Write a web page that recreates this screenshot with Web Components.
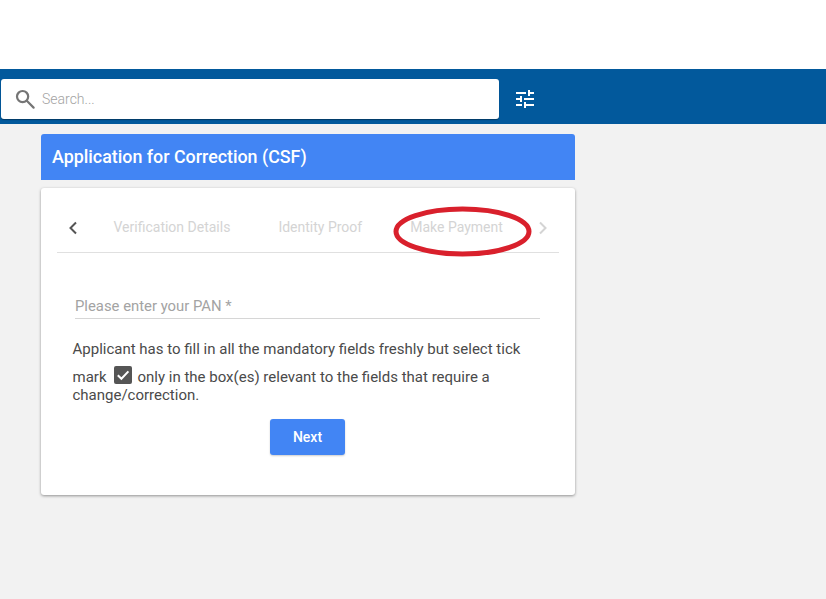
<!DOCTYPE html>
<html>
<head>
<meta charset="utf-8">
<style>
  html, body { margin: 0; height: 100%; }
  body { background: #f2f2f2; font-family: Roboto, "Liberation Sans", sans-serif; color: #4a4a4a; }
</style>
</head>
<body>
<app-page>
  <search-bar></search-bar>
  <form-panel title-text="Application for Correction (CSF)">
    <step-tabs></step-tabs>
    <pan-form></pan-form>
  </form-panel>
</app-page>

<script>
class AppPage extends HTMLElement {
  constructor() {
    super();
    this.attachShadow({ mode: 'open' });
    this.shadowRoot.innerHTML = `
      <style>
        :host { display: block; height: 599px; padding-top: 69px; box-sizing: border-box; background: linear-gradient(#fff 69px, #f2f2f2 69px); }
      </style>
      <slot></slot>`;
  }
}

class SearchBar extends HTMLElement {
  constructor() {
    super();
    this.attachShadow({ mode: 'open' });
    this.shadowRoot.innerHTML = `
      <style>
        :host { display: flex; align-items: flex-start; height: 55px; background: #02599c; padding: 10px 0 0 1px; box-sizing: border-box; }
        .box { width: 498px; height: 40px; background: #fff; border-radius: 3px; display: flex; align-items: center; box-shadow: 0 1px 1px rgba(0,0,0,.35); }
        .lens { margin-left: 14px; width: 20px; height: 20px; flex: none; }
        .ph { margin-left: 7px; font-size: 14px; font-weight: 300; color: #a3a3a3; }
        .tune { margin: 8px 0 0 14px; width: 24px; height: 24px; flex: none; }
      </style>
      <div class="box">
        <svg class="lens" viewBox="0 0 20 20" fill="none" stroke="#757575" stroke-width="2.2">
          <circle cx="7.6" cy="7.6" r="5.6"/>
          <path d="M11.8 11.8 L18.6 18.6" stroke-linecap="round"/>
        </svg>
        <span class="ph">Search...</span>
      </div>
      <svg class="tune" viewBox="0 0 24 24" fill="#fff">
        <path d="M3 17v2h6v-2H3zM3 5v2h10V5H3zm10 16v-2h8v-2h-8v-2h-2v6h2zM7 9v2H3v2h4v2h2V9H7zm14 4v-2H11v2h10zm-6-4h2V7h4V5h-4V3h-2v6z"/>
      </svg>`;
  }
}

class FormPanel extends HTMLElement {
  constructor() {
    super();
    this.attachShadow({ mode: 'open' });
    this.shadowRoot.innerHTML = `
      <style>
        :host { display: block; width: 534px; margin: 10px 0 0 41px; }
        .head { height: 44px; padding-bottom: 2px; background: #4285f4; border-radius: 3px 3px 0 0; color: #fff; font-size: 17.85px; font-weight: 500; display: flex; align-items: center; padding-left: 11px; }
        .card { margin-top: 8px; height: 307px; box-sizing: border-box; background: #fff; border-radius: 3px; box-shadow: 0 1px 3px rgba(0,0,0,.4); padding: 16px 16px 0; }
      </style>
      <div class="head"></div>
      <div class="card"><slot></slot></div>`;
    this.shadowRoot.querySelector('.head').textContent = this.getAttribute('title-text');
  }
}

class StepTabs extends HTMLElement {
  constructor() {
    super();
    this.attachShadow({ mode: 'open' });
    this.shadowRoot.innerHTML = `
      <style>
        :host { display: flex; position: relative; align-items: center; height: 48px; border-bottom: 1px solid #e0e0e0; font-size: 14px; color: #d4d4d4; }
        .arrow { width: 10px; height: 14px; flex: none; }
        .left { margin-left: 11px; }
        span { position: relative; top: -1px; }
        .t1 { margin-left: 35.5px; }
        .t2 { margin-left: 48px; }
        .t3 { margin-left: 48px; }
        .right { margin-left: 35.5px; }
        .mark { position: absolute; left: 335px; top: 1px; width: 142px; height: 54px; }
      </style>
      <svg class="arrow left" viewBox="0 0 10 14" fill="none" stroke="#555" stroke-width="2"><path d="M8 1.5 L2.5 7 L8 12.5"/></svg>
      <span class="t1">Verification Details</span>
      <span class="t2">Identity Proof</span>
      <span class="t3">Make Payment</span>
      <svg class="arrow right" viewBox="0 0 10 14" fill="none" stroke="#d4d4d4" stroke-width="2"><path d="M2 1.5 L7.5 7 L2 12.5"/></svg>
      <svg class="mark" viewBox="0 0 142 54" fill="none" stroke="#d9202c" stroke-width="5">
        <ellipse cx="70.5" cy="26.5" rx="66.5" ry="22.5"/>
      </svg>`;
  }
}

class PanForm extends HTMLElement {
  constructor() {
    super();
    this.attachShadow({ mode: 'open' });
    this.shadowRoot.innerHTML = `
      <style>
        :host { display: block; }
        .field { margin: 43px 19px 0 18px; height: 22px; border-bottom: 1px solid #d6d6d6; color: #a3a3a3; font-size: 14.85px; line-height: 20px; box-sizing: content-box; }
        .note { margin: 22px 32px 0 15.5px; font-size: 15px; line-height: 17px; color: #4a4a4a; }
        .l1 { height: 17px; white-space: nowrap; }
        .l2 { display: flex; align-items: center; height: 23px; margin-top: 6px; white-space: nowrap; }
        .l2 span { position: relative; top: 1.5px; }
        .check { position: relative; top: -0.5px; width: 18px; height: 18px; margin: 0 6px 0 7px; flex: none; }
        .btnrow { margin-top: 15px; padding-left: 213px; }
        button { width: 75px; height: 36px; border: 0; border-radius: 3px; background: #4285f4; color: #fff; font: 500 14px Roboto, "Liberation Sans", sans-serif; padding: 0; box-shadow: 0 1px 2px rgba(0,0,0,.2); }
      </style>
      <div class="field">Please enter your PAN *</div>
      <div class="note">
        <div class="l1">Applicant has to fill in all the mandatory fields freshly but select tick</div>
        <div class="l2"><span>mark</span>
          <svg class="check" viewBox="0 0 18 18">
            <rect width="18" height="18" rx="2" fill="#555"/>
            <path d="M3.8 9.2 L7.4 12.8 L14.4 5.4" fill="none" stroke="#fff" stroke-width="2"/>
          </svg>
          <span>only in the box(es) relevant to the fields that require a</span></div>
        <div class="l3">change/correction.</div>
      </div>
      <div class="btnrow"><button>Next</button></div>`;
  }
}

customElements.define('app-page', AppPage);
customElements.define('search-bar', SearchBar);
customElements.define('form-panel', FormPanel);
customElements.define('step-tabs', StepTabs);
customElements.define('pan-form', PanForm);
</script>
</body>
</html>
